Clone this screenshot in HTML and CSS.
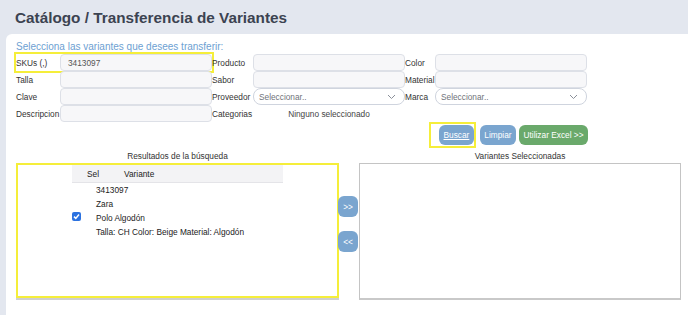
FILE: index.html
```html
<!DOCTYPE html>
<html lang="es">
<head>
    <meta charset="UTF-8">
    <meta name="viewport" content="width=device-width, initial-scale=1.0">
    <title>Transferencia de Variantes</title>
    <link rel="stylesheet" href="styles.css">
</head>
<body>
    <header class="page-header">
        <h1>Catálogo / Transferencia de Variantes</h1>
    </header>

    <div class="card">
        <p class="intro">Selecciona las variantes que desees transferir:</p>

        <div class="fields">
            <div class="field col-1 highlight">
                <label>SKUs (,)</label>
                <input type="text" value="3413097">
            </div>
            <div class="field col-2">
                <label>Producto</label>
                <input type="text">
            </div>
            <div class="field col-3">
                <label>Color</label>
                <input type="text">
            </div>

            <div class="field col-1">
                <label>Talla</label>
                <input type="text">
            </div>
            <div class="field col-2">
                <label>Sabor</label>
                <input type="text">
            </div>
            <div class="field col-3">
                <label>Material</label>
                <input type="text">
            </div>

            <div class="field col-1">
                <label>Clave</label>
                <input type="text">
            </div>
            <div class="field col-2">
                <label>Proveedor</label>
                <div class="select">
                    <span>Seleccionar..</span>
                    <svg width="9" height="6" viewBox="0 0 9 6"><polyline points="1,1 4.5,4.5 8,1" fill="none" stroke="#8a8f99" stroke-width="1"/></svg>
                </div>
            </div>
            <div class="field col-3">
                <label>Marca</label>
                <div class="select">
                    <span>Seleccionar..</span>
                    <svg width="9" height="6" viewBox="0 0 9 6"><polyline points="1,1 4.5,4.5 8,1" fill="none" stroke="#8a8f99" stroke-width="1"/></svg>
                </div>
            </div>

            <div class="field col-1">
                <label>Descripcion</label>
                <input type="text">
            </div>
            <div class="field col-2">
                <label>Categorias</label>
                <span class="none">Ninguno seleccionado</span>
            </div>
        </div>

        <div class="actions">
            <span class="btn-highlight"><button class="btn btn-blue btn-link">Buscar</button></span>
            <button class="btn btn-blue btn-clear">Limpiar</button>
            <button class="btn btn-green">Utilizar Excel &gt;&gt;</button>
        </div>

        <div class="panels">
            <div class="panel">
                <div class="panel-title">Resultados de la búsqueda</div>
                <div class="panel-box results">
                    <div class="table">
                        <div class="table-head">
                            <span class="th-sel">Sel</span>
                            <span>Variante</span>
                        </div>
                        <div class="table-row">
                            <div class="cell-check">
                                <span class="checkbox">
                                    <svg width="9" height="9" viewBox="0 0 9 9"><polyline points="2,4.6 3.8,6.4 7,2.6" fill="none" stroke="#fff" stroke-width="1.5"/></svg>
                                </span>
                            </div>
                            <div class="cell-variant">
                                <div>3413097</div>
                                <div>Zara</div>
                                <div>Polo Algodón</div>
                                <div>Talla: CH Color: Beige Material: Algodón</div>
                            </div>
                        </div>
                    </div>
                </div>
            </div>

            <div class="arrows">
                <button class="arrow">&gt;&gt;</button>
                <button class="arrow">&lt;&lt;</button>
            </div>

            <div class="panel">
                <div class="panel-title">Variantes Seleccionadas</div>
                <div class="panel-box selected"></div>
            </div>
        </div>
    </div>
</body>
</html>
```

FILE: styles.css
```css
:root {
    --page-bg: #e3e7ef;
    --title-color: #3c4351;
    --intro-color: #6d9fd2;
    --text-color: #333;
    --input-border: #dde0e7;
    --input-bg: #f7f7f9;
    --blue-btn: #7aa5cf;
    --green-btn: #6aa96b;
    --highlight: #f5ee3a;
}

* {
    box-sizing: border-box;
}

body {
    margin: 0;
    background-color: var(--page-bg);
    font-family: "Liberation Sans", Arial, sans-serif;
    color: var(--text-color);
}

.page-header {
    height: 34px;
    padding: 1px 0 0 15px;
    display: flex;
    align-items: center;
}

h1 {
    margin: 0;
    font-size: 15.3px;
    font-weight: bold;
    color: var(--title-color);
}

.card {
    margin-left: 6px;
    height: 281px;
    background-color: #fff;
    border-top-left-radius: 6px;
    padding: 6px 0 0 10px;
}

.intro {
    margin: 0;
    font-size: 10px;
    line-height: 14px;
    color: var(--intro-color);
}

/* search form */
.fields {
    display: grid;
    grid-template-columns: 196px 193px 182px;
    grid-auto-rows: 17px;
}

.field {
    display: flex;
    align-items: center;
    font-size: 8.3px;
}

.field label {
    flex: none;
    color: var(--text-color);
}

.col-1 label { width: 44px; }
.col-2 label { width: 41px; }
.col-3 label { width: 30px; }

.field input {
    flex: 1;
    min-width: 0;
    height: 17px;
    margin: 0;
    padding: 0 7px;
    border: 1px solid var(--input-border);
    border-radius: 4px;
    background-color: var(--input-bg);
    font: inherit;
    font-size: 8.3px;
    color: #555;
}

.highlight {
    outline: 2px solid var(--highlight);
    outline-offset: 0;
}

.select {
    flex: 1;
    height: 17px;
    display: flex;
    align-items: center;
    justify-content: space-between;
    padding: 0 8px 0 5px;
    border: 1px solid #cfd4de;
    border-radius: 8px;
    background-color: #fff;
    color: #6f737a;
}

.none {
    flex: 1;
    text-align: center;
    color: #444;
}

/* buttons */
.actions {
    width: 572px;
    margin-top: 0;
    display: flex;
    justify-content: flex-end;
    align-items: center;
    gap: 3px;
}

.btn-highlight {
    display: flex;
    padding: 1px 0 1px 8px;
    border: 2px solid var(--highlight);
}

.btn {
    height: 20px;
    padding: 0 4.5px;
    border: none;
    border-radius: 6px;
    color: #fff;
    font-family: inherit;
    font-size: 8.3px;
    cursor: pointer;
}

.btn-blue { background-color: var(--blue-btn); }
.btn-green { background-color: var(--green-btn); }

.btn-link {
    text-decoration: underline;
}

.btn-clear {
    margin-left: 1px;
}

/* result panels */
.panels {
    margin-top: 2px;
    display: grid;
    grid-template-columns: 323px 20px 322px;
}

.panel-title {
    height: 13px;
    font-size: 8.3px;
    line-height: 12px;
    text-align: center;
    color: var(--text-color);
}

.panel-box {
    background-color: #fff;
}

.results {
    height: 135px;
    border: 2px solid var(--highlight);
    box-shadow: 0 2px 0 #cfcfcf;
}

.selected {
    height: 137px;
    border: 1px solid #c4c4c4;
    border-bottom: 2px solid #c9c9c9;
}

.arrows {
    padding-top: 46px;
    display: flex;
    flex-direction: column;
    gap: 14px;
    margin-left: -1px;
}

.arrow {
    width: 20px;
    height: 21px;
    padding: 0;
    border: none;
    border-radius: 6px;
    background-color: var(--blue-btn);
    color: #fff;
    font-family: inherit;
    font-size: 8.3px;
    position: relative;
}

/* results table */
.table {
    width: 211px;
    margin-left: 54px;
    font-size: 8.3px;
    color: #222;
}

.table-head {
    height: 18px;
    display: flex;
    align-items: center;
    background-color: #f3f3f5;
    border-bottom: 1px solid #e4e4e8;
}

.th-sel {
    width: 52px;
    padding-left: 15px;
}

.table-row {
    display: flex;
}

.cell-check {
    width: 24px;
    padding-top: 29px;
}

.cell-variant {
    line-height: 14px;
}

.checkbox {
    display: block;
    width: 9px;
    height: 9px;
    border-radius: 2px;
    background-color: #2c72e0;
}

.checkbox svg {
    display: block;
}
```
